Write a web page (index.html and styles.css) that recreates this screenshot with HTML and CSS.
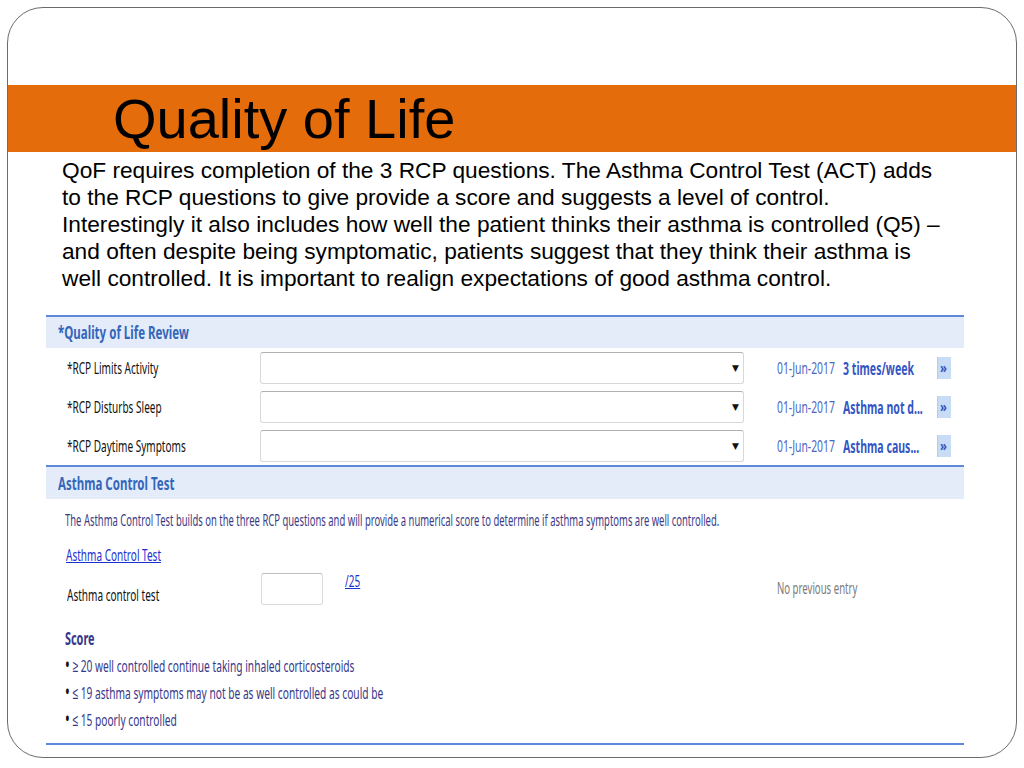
FILE: index.html
```
<!DOCTYPE html>
<html>
<head>
<meta charset="utf-8">
<link rel="stylesheet" href="styles.css">
</head>
<body>
<div class="slide">
  <div class="top-space"></div>
  <div class="band"><h1>Quality of Life</h1></div>
  <p class="intro">QoF requires completion of the 3 RCP questions. The Asthma Control Test (ACT) adds to the RCP questions to give provide a score and suggests a level of control. Interestingly it also includes how well the patient thinks their asthma is controlled (Q5) – and often despite being symptomatic, patients suggest that they think their asthma is well controlled. It is important to realign expectations of good asthma control.</p>
  <div class="panel">
    <section class="sec">
      <div class="sec-head"><span class="sx">*Quality of Life Review</span></div>
      <div class="row">
        <div class="lab"><span class="sx">*RCP Limits Activity</span></div>
        <div class="sel"><span class="arrow">▼</span></div>
        <div class="date"><span class="sx">01-Jun-2017</span></div>
        <div class="val"><span class="sx">3 times/week</span></div>
        <div class="btn"><span class="sx">»</span></div>
      </div>
      <div class="row">
        <div class="lab"><span class="sx">*RCP Disturbs Sleep</span></div>
        <div class="sel"><span class="arrow">▼</span></div>
        <div class="date"><span class="sx">01-Jun-2017</span></div>
        <div class="val"><span class="sx">Asthma not d...</span></div>
        <div class="btn"><span class="sx">»</span></div>
      </div>
      <div class="row">
        <div class="lab"><span class="sx">*RCP Daytime Symptoms</span></div>
        <div class="sel"><span class="arrow">▼</span></div>
        <div class="date"><span class="sx">01-Jun-2017</span></div>
        <div class="val"><span class="sx">Asthma caus...</span></div>
        <div class="btn"><span class="sx">»</span></div>
      </div>
    </section>
    <section class="sec sec2">
      <div class="sec-head"><span class="sx">Asthma Control Test</span></div>
      <div class="body2">
        <div class="desc"><span class="sx">The Asthma Control Test builds on the three RCP questions and will provide a numerical score to determine if asthma symptoms are well controlled.</span></div>
        <div class="link"><span class="sx">Asthma Control Test</span></div>
        <div class="act-row">
          <div class="lab"><span class="sx">Asthma control test</span></div>
          <div class="score-input"></div>
          <div class="of"><span class="sx">/25</span></div>
          <div class="noprev"><span class="sx">No previous entry</span></div>
        </div>
        <div class="score">
          <div class="score-title"><span class="sx">Score</span></div>
          <div class="bl"><span class="sx"><span class="dot">•</span> ≥ 20 well controlled continue taking inhaled corticosteroids</span></div>
          <div class="bl"><span class="sx"><span class="dot">•</span> ≤ 19 asthma symptoms may not be as well controlled as could be</span></div>
          <div class="bl"><span class="sx"><span class="dot">•</span> ≤ 15 poorly controlled</span></div>
        </div>
      </div>
    </section>
  </div>
</div>
</body>
</html>
```
FILE: styles.css
```
html, body {
  margin: 0;
  padding: 0;
  background: #ffffff;
}
.slide {
  margin: 7px;
  height: 749px;
  border: 1px solid #6b6b6b;
  border-radius: 36px;
  overflow: hidden;
  background: #fff;
}
.top-space {
  height: 77px;
}
.band {
  height: 67px;
  background: #e46c0a;
  padding-left: 105px;
}
.band h1 {
  margin: 0;
  font: normal 56px/67px "Liberation Sans", Arial, sans-serif;
  color: #000;
}
.intro {
  margin: 5px 0 0 54px;
  width: 890px;
  font: 22.7px/27px "Liberation Sans", Arial, sans-serif;
  color: #000;
}
.panel {
  margin: 23px 0 0 38px;
  width: 918px;
  font-family: "Noto Sans", sans-serif;
  font-size: 17px;
}
.sx {
  display: inline-block;
  white-space: nowrap;
  transform: scaleX(0.59);
  transform-origin: 0 50%;
}
.sec {
  border-top: 2px solid #5f89d8;
}
.sec-head {
  height: 31px;
  background: #e4ecf9;
  padding-left: 12px;
  font-weight: bold;
  font-size: 18px;
  line-height: 31px;
  color: #3466b9;
}
.sec-head .sx {
  transform: scaleX(0.64);
}
.row {
  display: grid;
  grid-template-columns: 214px 484px 33px 66px 94px 14px;
  height: 39px;
  align-items: center;
}
.lab {
  padding-left: 21px;
  color: #111;
  line-height: 20px;
}
.sel {
  height: 30px;
  border: 1px solid #d8d8d8;
  border-top-color: #b0b0b0;
  border-radius: 3px;
  background: #fff;
  display: flex;
  justify-content: flex-end;
  align-items: center;
  padding-right: 4px;
}
.arrow {
  font-family: "DejaVu Sans", sans-serif;
  font-size: 9px;
  color: #111;
}
.date {
  grid-column: 4;
  color: #4a66c4;
  line-height: 20px;
}
.date .sx {
  transform: scaleX(0.61);
}
.val {
  color: #3456c4;
  font-weight: bold;
  font-size: 18px;
  line-height: 20px;
}
.val .sx {
  transform: scaleX(0.587);
}
.btn {
  width: 14px;
  height: 22px;
  background: #c9dcf6;
  border-left: 1px solid #b5ccee;
  box-sizing: border-box;
  color: #2f55bd;
  font-weight: bold;
  font-size: 15px;
  line-height: 20px;
  padding-left: 2px;
}
.btn .sx {
  transform: scaleX(0.75);
}
.sec2 {
  border-bottom: 2px solid #5f89d8;
}
.sec2 .sec-head {
  height: 32px;
  line-height: 32px;
}
.body2 {
  padding: 11px 0 10px 0;
}
.desc {
  padding-left: 19px;
  line-height: 20px;
  color: #3b3b86;
  white-space: nowrap;
}
.desc .sx {
  transform: scaleX(0.556);
}
.link {
  margin-top: 15px;
  padding-left: 20px;
  line-height: 20px;
  color: #1c2fd0;
}
.link .sx,
.of .sx {
  text-decoration: underline;
}
.act-row {
  margin-top: 8px;
  display: grid;
  grid-template-columns: 215px 62px 22px 432px auto;
  height: 32px;
}
.act-row .lab {
  align-self: end;
}
.score-input {
  grid-column: 2;
  height: 30px;
  border: 1px solid #dcdcdc;
  border-top-color: #bdbdbd;
  border-radius: 3px;
  background: #fff;
}
.of {
  grid-column: 4;
  line-height: 16px;
  color: #1c2fd0;
}
.noprev {
  grid-column: 5;
  margin-top: 5px;
  line-height: 20px;
  color: #7a7a7a;
}
.noprev .sx {
  transform: scaleX(0.565);
}
.score {
  margin-top: 20px;
  padding-left: 19px;
  color: #373789;
}
.score-title {
  font-weight: bold;
  font-size: 18px;
  line-height: 27px;
}
.score-title .sx {
  transform: scaleX(0.604);
}
.bl {
  line-height: 27px;
  height: 27px;
}
.bl .sx {
  transform: scaleX(0.6);
}
.dot {
  color: #111;
  font-size: 21px;
  line-height: 20px;
}
```
